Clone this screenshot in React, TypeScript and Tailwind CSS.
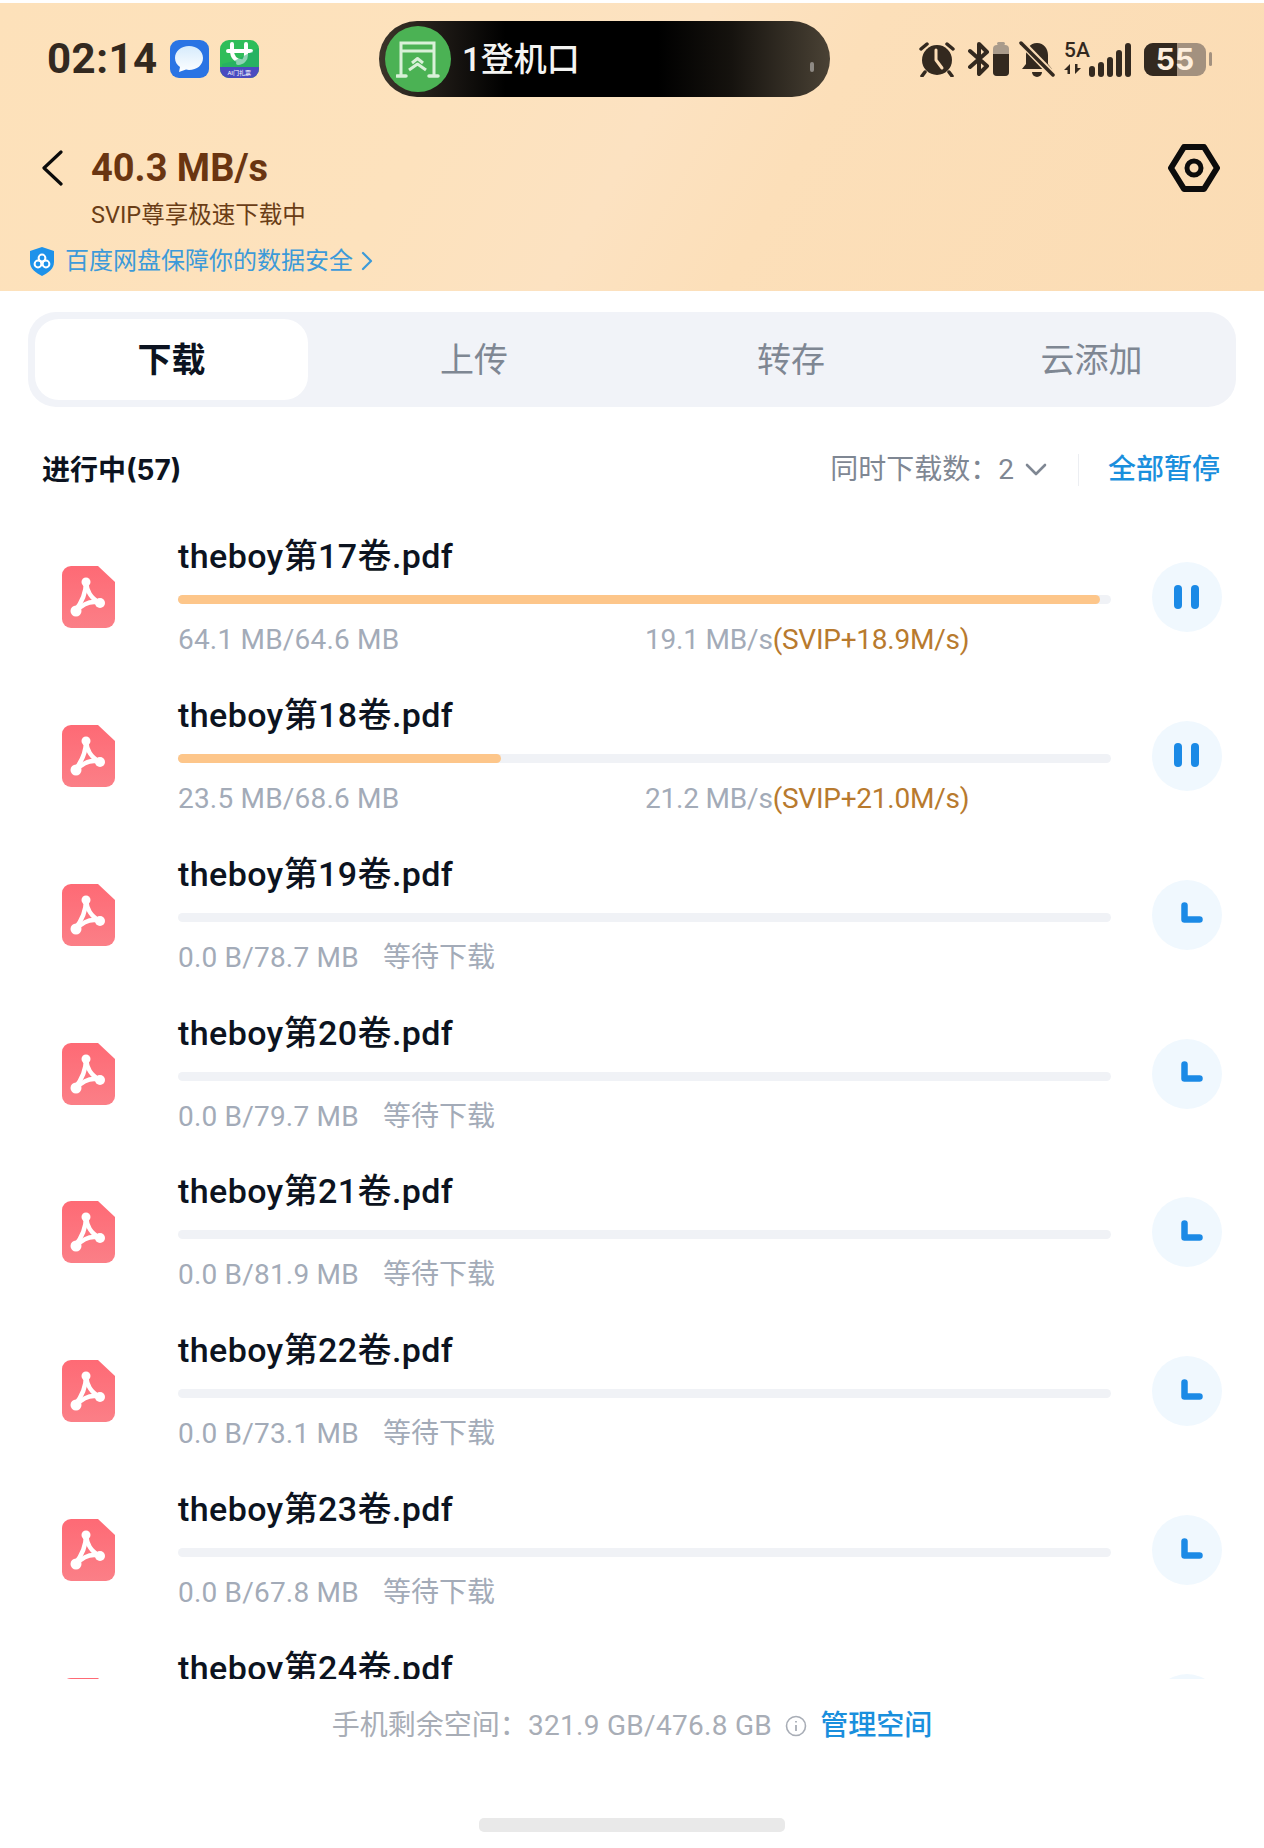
const files = [
  { name: "theboy第17卷.pdf", size: "64.1 MB/64.6 MB", speed: "19.1 MB/s", vip: "(SVIP+18.9M/s)", fill: "w-[922px]", active: true },
  { name: "theboy第18卷.pdf", size: "23.5 MB/68.6 MB", speed: "21.2 MB/s", vip: "(SVIP+21.0M/s)", fill: "w-[323px]", active: true },
  { name: "theboy第19卷.pdf", size: "0.0 B/78.7 MB" },
  { name: "theboy第20卷.pdf", size: "0.0 B/79.7 MB" },
  { name: "theboy第21卷.pdf", size: "0.0 B/81.9 MB" },
  { name: "theboy第22卷.pdf", size: "0.0 B/73.1 MB" },
  { name: "theboy第23卷.pdf", size: "0.0 B/67.8 MB" },
  { name: "theboy第24卷.pdf", size: "0.0 B/70.2 MB" },
];

function PdfIcon() {
  return (
    <svg width="53" height="62" viewBox="0 0 53 62">
      <defs>
        <linearGradient id="pdf" x1="0" y1="0" x2="0" y2="1">
          <stop offset="0" stopColor="#fe6a75" />
          <stop offset="1" stopColor="#fb7f87" />
        </linearGradient>
      </defs>
      <path d="M9 0H36L53 16V53a9 9 0 0 1-9 9H9a9 9 0 0 1-9-9V9a9 9 0 0 1 9-9Z" fill="url(#pdf)" />
      <g fill="none" stroke="#fff" strokeLinecap="round" strokeLinejoin="round">
        <path d="M24 16C24 24 21 35 13 45" strokeWidth="4.5" />
        <path d="M24 16C25 25 28 32 38 37" strokeWidth="4.5" />
        <path d="M14 45C20 39 29 34 38 37" strokeWidth="4.5" />
      </g>
      <circle cx="24" cy="16" r="4.5" fill="#fff" />
      <circle cx="14" cy="45" r="5.5" fill="#fff" />
      <circle cx="38" cy="37" r="5" fill="#fff" />
    </svg>
  );
}

function PauseGlyph() {
  return (
    <div className="flex gap-[9px] -mt-[1px] -ml-[1px]">
      <span className="w-2 h-6 rounded-full bg-[#1b8ae6]" />
      <span className="w-2 h-6 rounded-full bg-[#1b8ae6]" />
    </div>
  );
}

function WaitGlyph() {
  return (
    <svg width="22" height="22" viewBox="0 0 22 22" className="ml-[9px] mb-[3px]">
      <path d="M3.5 3.5V17.5H18.5" fill="none" stroke="#1b8ae6" strokeWidth="6.5" strokeLinecap="round" strokeLinejoin="round" />
    </svg>
  );
}

function StatusIcons() {
  return (
    <div className="flex items-center text-[#33291f]">
      <svg width="38" height="36" viewBox="0 0 38 36">
        <circle cx="19" cy="19" r="15" fill="#33291f" />
        <path d="M18 9V19L24 27" fill="none" stroke="#fbdcb5" strokeWidth="3" strokeLinecap="round" strokeLinejoin="round" />
        <path d="M3 8L9 3M35 8L29 3M7 31L4 35M31 31L34 35" stroke="#33291f" strokeWidth="3.5" strokeLinecap="round" />
      </svg>
      <svg width="22" height="36" viewBox="0 0 22 36" className="ml-3">
        <path d="M2 10L19 25L11 33V3L19 11L2 26" fill="none" stroke="#33291f" strokeWidth="4" strokeLinejoin="round" strokeLinecap="round" />
      </svg>
      <div className="ml-[3px] w-[16px] h-[34px] flex flex-col items-center">
        <span className="w-2 h-[3px] rounded-sm bg-[#a99b8b]" />
        <div className="w-[16px] h-[31px] rounded-[4px] bg-[#a99b8b] overflow-hidden flex flex-col justify-end">
          <span className="block h-[22px] bg-[#33291f]" />
        </div>
      </div>
      <svg width="36" height="38" viewBox="0 0 36 38" className="ml-[10px]">
        <path d="M18 3C11 3 7 9 7 15V24L3 29H33L29 24V15C29 9 25 3 18 3Z" fill="#33291f" />
        <path d="M13 32H23A5 5 0 0 1 13 32Z" fill="#33291f" />
        <path d="M2 2L34 35" stroke="#fbdcb5" strokeWidth="7" />
        <path d="M2 3L34 35" stroke="#33291f" strokeWidth="3.5" strokeLinecap="round" />
      </svg>
      <div className="relative ml-[9px] w-[73px] h-[36px]">
        <span className="absolute left-0 top-[-2px] text-[21px] leading-[22px] font-medium">5A</span>
        <svg width="20" height="10" viewBox="0 0 20 10" className="absolute left-0 bottom-[3px]">
          <path d="M6 0V10H3.5V6H0ZM11 0V10L17 4H13.5V0Z" fill="#33291f" />
        </svg>
        <div className="absolute left-[25px] bottom-0 flex items-end gap-[3px]">
          <span className="w-[6px] h-[11px] rounded-full bg-[#33291f]" />
          <span className="w-[6px] h-[15px] rounded-full bg-[#33291f]" />
          <span className="w-[6px] h-[20px] rounded-full bg-[#33291f]" />
          <span className="w-[6px] h-[27px] rounded-full bg-[#33291f]" />
          <span className="w-[6px] h-[34px] rounded-full bg-[#33291f]" />
        </div>
      </div>
      <div className="relative ml-[7px] w-[62px] h-[33px] rounded-[9px] bg-[#a3917f] overflow-hidden">
        <div className="w-[33px] h-full bg-[#33291f]" />
        <span className="absolute inset-0 flex items-center justify-center text-[30px] leading-[33px] font-bold text-[#fdeedd] font-['Inter',sans-serif]">55</span>
      </div>
      <span className="ml-[3px] w-[3px] h-[14px] rounded-full bg-[#a3917f]" />
    </div>
  );
}

function AppIcons() {
  return (
    <div className="flex items-center gap-[11px] ml-3">
      <div className="w-[39px] h-[38px] rounded-[9px] bg-[#2a74e4] flex items-center justify-center">
        <svg width="30" height="28" viewBox="0 0 30 28">
          <defs>
            <linearGradient id="bubble" x1="0" y1="0" x2="0" y2="1">
              <stop offset="0" stopColor="#d6ebfc" />
              <stop offset="1" stopColor="#fdfeff" />
            </linearGradient>
          </defs>
          <path d="M15 1C7 1 1 6 1 13C1 17 3 20 6 22L5 27L12 24.5C13 24.8 14 25 15 25C23 25 29 20 29 13C29 6 23 1 15 1Z" fill="url(#bubble)" />
        </svg>
      </div>
      <div className="w-[39px] h-[38px] rounded-[9px] overflow-hidden bg-[#2fbd5a] flex flex-col">
        <svg width="39" height="27" viewBox="0 0 39 27">
          <path d="M8 11H31M12 4V11C12 17 16 21 21 21M26 4V15C26 19 23 23 18 23" fill="none" stroke="#fff" strokeWidth="4" strokeLinecap="round" />
          <path d="M2 24L14 21L39 8V27H2Z" fill="#1fa76a" opacity="0.5" />
        </svg>
        <div className="flex-1 bg-[#4a4bc0] text-[6px] leading-[11px] text-center text-white">AI门礼票</div>
      </div>
    </div>
  );
}

function Header() {
  return (
    <header className="h-[288px] mt-[3px] shrink-0 bg-[linear-gradient(120deg,#fde1ba_0%,#fde2bd_35%,#fce2c1_50%,#fcdfb9_62%,#fbdcb4_100%)]">
      <div className="relative h-[112px] flex items-center pl-[47px] pr-[52px] justify-between">
        <div className="flex items-center">
          <span className="text-[42px] leading-none font-bold text-[#33291f] tracking-[0.5px]">02:14</span>
          <AppIcons />
        </div>
        <StatusIcons />
        <div className="absolute left-[379px] top-[18px] w-[451px] h-[76px] rounded-[38px] bg-[linear-gradient(90deg,#3c352a_0%,#1d1915_14%,#000_28%,#000_62%,#15120e_78%,#4a4235_100%)] flex items-center pl-[6px]">
          <div className="w-[66px] h-[66px] rounded-full bg-[#4bb254] flex items-center justify-center">
            <svg width="44" height="40" viewBox="0 0 44 40" fill="none">
              <path d="M5 37V4H38V37M5 12H38" stroke="#d9f1d8" strokeWidth="3" />
              <path d="M1 37H10M33 37H42" stroke="#d9f1d8" strokeWidth="3.5" strokeLinecap="round" />
              <path d="M16 24L21.5 19.5L27 24M13 31L21.5 25L30 31" stroke="#d9f1d8" strokeWidth="3" strokeLinejoin="round" />
            </svg>
          </div>
          <span className="ml-[11px] text-[33px] leading-none font-medium text-[#f4f4f2]">1登机口</span>
          <span className="absolute right-[16px] top-[41px] w-[4px] h-[10px] rounded-full bg-[#8e8a84]" />
        </div>
      </div>
      <div className="flex items-center justify-between pl-[41px] pr-[44px] pt-[33px] h-[73px]">
        <div className="flex items-center gap-[28px]">
          <svg width="22" height="36" viewBox="0 0 22 36" fill="none">
            <path d="M20 2L3 18L20 34" stroke="#0b0b0b" strokeWidth="3.2" strokeLinecap="round" strokeLinejoin="round" />
          </svg>
          <span className="text-[38px] leading-none font-bold text-[#6a3511]">40.3 MB/s</span>
        </div>
        <svg width="52" height="48" viewBox="0 0 52 48" fill="none" className="shrink-0">
          <path d="M16 3H36L49 24L36 45H16L3 24Z" stroke="#0c0c0c" strokeWidth="6" strokeLinejoin="round" />
          <circle cx="26" cy="24" r="7" stroke="#0c0c0c" strokeWidth="5" />
        </svg>
      </div>
      <p className="pl-[91px] mt-[12px] text-[23.5px] leading-[30px] text-[#6a3d16]">SVIP尊享极速下载中</p>
      <div className="flex items-center pl-[29px] mt-[16px] h-[30px]">
        <svg width="26" height="29" viewBox="0 0 26 29">
          <path d="M13 0L25 4V15C25 22 19 26 13 29C7 26 1 22 1 15V4Z" fill="#1d92ea" />
          <g fill="none" stroke="#fff" strokeWidth="2">
            <circle cx="13" cy="11" r="3.4" />
            <circle cx="9" cy="17" r="3.4" />
            <circle cx="17" cy="17" r="3.4" />
          </g>
        </svg>
        <span className="ml-[10px] text-[24px] leading-[30px] text-[#3c9ad9]">百度网盘保障你的数据安全</span>
        <svg width="12" height="20" viewBox="0 0 12 20" fill="none" className="ml-[8px]">
          <path d="M2 2L10 10L2 18" stroke="#3c9ad9" strokeWidth="2.2" strokeLinecap="round" strokeLinejoin="round" />
        </svg>
      </div>
    </header>
  );
}

function Tabs() {
  return (
    <div className="mx-[28px] mt-[21px] h-[95px] shrink-0 rounded-[28px] bg-[#f1f3f8] p-[7px] grid grid-cols-[273px_332px_302px_1fr] text-[34px] text-[#7f8793]">
      <div className="rounded-[24px] bg-white flex items-center justify-center pt-[2px] font-bold text-[#0c1320]">下载</div>
      <div className="flex items-center justify-center pt-[2px]">上传</div>
      <div className="flex items-center justify-center pt-[2px]">转存</div>
      <div className="flex items-center justify-center pt-[2px] pl-3">云添加</div>
    </div>
  );
}

function Row({ file }: { file: (typeof files)[number] }) {
  return (
    <div className="h-[158.85px] shrink-0 flex items-start pl-[62px] pr-[42px]">
      <div className="pt-[65px] w-[116px] shrink-0">
        <PdfIcon />
      </div>
      <div className="w-[933px] shrink-0">
        <div className="pt-[33px] text-[34px] leading-[44px] font-medium text-[#0c1320] tracking-[0.4px]">{file.name}</div>
        <div className="mt-[17px] h-[9px] rounded-full bg-[#f0f2f6]">
          {file.fill && <div className={`h-full rounded-full bg-[#fdc68a] ${file.fill}`} />}
        </div>
        <div className="mt-[18px] flex text-[28px] leading-[36px] text-[#a3abb8]">
          <span className={file.active ? "w-[467px] tracking-[0.2px]" : "w-[205px] tracking-[0.2px]"}>{file.size}</span>
          {file.active ? (
            <span className="tracking-[-0.2px]">
              {file.speed}
              <span className="text-[#b87a2e] tracking-[-0.25px]">{file.vip}</span>
            </span>
          ) : (
            <span>等待下载</span>
          )}
        </div>
      </div>
      <div className="ml-[41px] mt-[61px] w-[70px] h-[70px] shrink-0 rounded-full bg-[#f0f8fe] flex items-center justify-center">
        {file.active ? <PauseGlyph /> : <WaitGlyph />}
      </div>
    </div>
  );
}

export default function App() {
  return (
    <div className="w-[1264px] h-[1848px] bg-white overflow-hidden flex flex-col font-['Roboto','Noto_Sans_CJK_SC',sans-serif]">
      <Header />
      <Tabs />
      <div className="mt-[41px] h-[44px] shrink-0 flex items-center justify-between pl-[42px] pr-[44px]">
        <span className="text-[28px] font-bold text-[#0c1320] font-['Inter','Noto_Sans_CJK_SC',sans-serif]">进行中(57)</span>
        <div className="flex items-center">
          <span className="text-[28px] text-[#7f8793]">同时下载数：</span>
          <span className="text-[28px] text-[#7f8793]">2</span>
          <svg width="22" height="14" viewBox="0 0 22 14" fill="none" className="ml-[11px]">
            <path d="M2 2L11 11L20 2" stroke="#7f8793" strokeWidth="2.6" strokeLinecap="round" strokeLinejoin="round" />
          </svg>
          <span className="ml-[31px] w-[1px] h-[32px] bg-[#eceef2]" />
          <span className="ml-[29px] text-[28px] font-medium text-[#1a8fdd]">全部暂停</span>
        </div>
      </div>
      <div className="mt-[9px] h-[1178px] shrink-0 overflow-hidden flex flex-col">
        {files.map((f) => (
          <Row key={f.name} file={f} />
        ))}
      </div>
      <div className="mt-[29px] h-[36px] shrink-0 flex items-center justify-center text-[28px] text-[#a8adb6]">
        <span>手机剩余空间：</span>
        <span className="tracking-[0.3px]">321.9 GB/476.8 GB</span>
        <svg width="22" height="22" viewBox="0 0 22 22" fill="none" className="ml-[13px]">
          <circle cx="11" cy="11" r="9.5" stroke="#a8adb6" strokeWidth="1.6" />
          <path d="M11 10V16M11 6V7.5" stroke="#a8adb6" strokeWidth="1.8" />
        </svg>
        <span className="ml-[13px] font-medium text-[#1a8fdd]">管理空间</span>
      </div>
      <div className="mt-[74px] mx-auto w-[306px] h-[14px] shrink-0 rounded-[5px] bg-[#e9e9e9]" />
    </div>
  );
}
